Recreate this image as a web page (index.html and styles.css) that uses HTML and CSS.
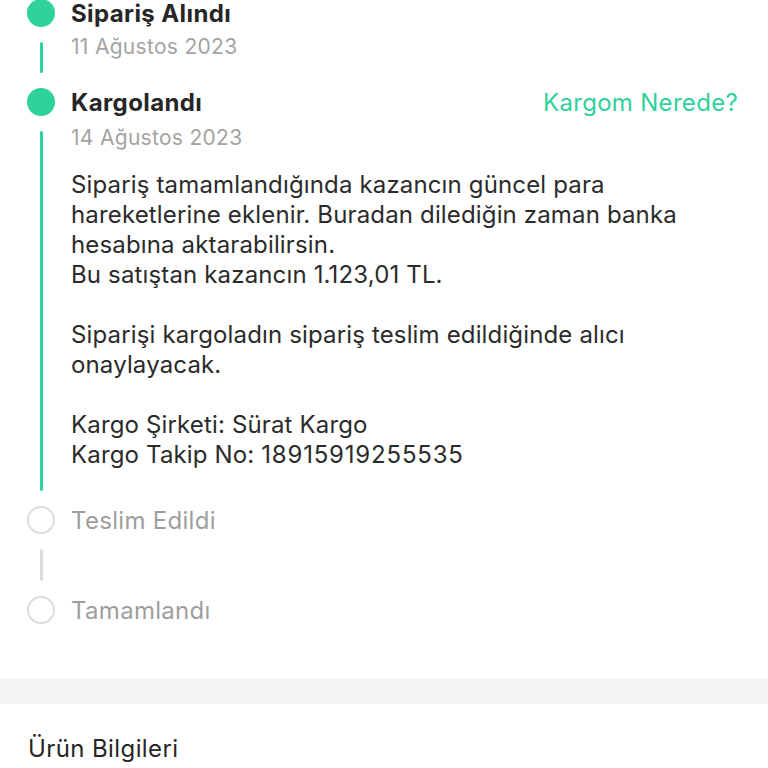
FILE: index.html
```html
<!DOCTYPE html>
<html lang="tr">
<head>
    <meta charset="UTF-8">
    <meta name="viewport" content="width=device-width, initial-scale=1.0">
    <title>Sipariş Durumu</title>
    <link rel="stylesheet" href="styles.css">
</head>
<body>

    <div class="timeline">
        <div class="step done">
            <div class="marker">
                <span class="dot"></span>
                <span class="line"></span>
            </div>
            <div class="content">
                <div class="title-row">
                    <h2>Sipariş Alındı</h2>
                </div>
                <div class="date">11 Ağustos 2023</div>
            </div>
        </div>

        <div class="step done current">
            <div class="marker">
                <span class="dot"></span>
                <span class="line"></span>
            </div>
            <div class="content">
                <div class="title-row">
                    <h2>Kargolandı</h2>
                    <a href="#" class="track">Kargom Nerede?</a>
                </div>
                <div class="date">14 Ağustos 2023</div>
                <div class="info">
                    <p>Sipariş tamamlandığında kazancın güncel para hareketlerine eklenir. Buradan dilediğin zaman banka hesabına aktarabilirsin.<br>Bu satıştan kazancın 1.123,01 TL.</p>
                    <p>Siparişi kargoladın sipariş teslim edildiğinde alıcı onaylayacak.</p>
                    <p>Kargo Şirketi: Sürat Kargo<br>Kargo Takip No: <span class="num">18915919255535</span></p>
                </div>
            </div>
        </div>

        <div class="step pending">
            <div class="marker">
                <span class="dot"></span>
                <span class="line"></span>
            </div>
            <div class="content">
                <div class="title-row">
                    <h2>Teslim Edildi</h2>
                </div>
            </div>
        </div>

        <div class="step pending last">
            <div class="marker">
                <span class="dot"></span>
            </div>
            <div class="content">
                <div class="title-row">
                    <h2>Tamamlandı</h2>
                </div>
            </div>
        </div>
    </div>

    <div class="divider"></div>

    <div class="section">
        <h3>Ürün Bilgileri</h3>
    </div>

</body>
</html>
```

FILE: styles.css
```css
* {
    margin: 0;
    padding: 0;
    box-sizing: border-box;
}

body {
    font-family: Inter, "Noto Sans", sans-serif;
    color: #262626;
    background: #fff;
    overflow: hidden;
}

.timeline {
    margin-top: -1px;
    padding: 0 30px 0 27px;
}

.step {
    display: flex;
    gap: 16px;
}

.marker {
    width: 28px;
    display: flex;
    flex-direction: column;
    align-items: center;
    flex-shrink: 0;
}

.dot {
    width: 28px;
    height: 28px;
    border-radius: 50%;
    flex-shrink: 0;
}

.line {
    flex: 1;
    width: 3px;
    border-radius: 2px;
    margin: 15px 0;
}

.done .dot,
.done .line {
    background: #2fd19c;
}

.pending .dot {
    border: 2px solid #dcdcdc;
}

.pending .line {
    background: #dcdcdc;
}

.content {
    flex: 1;
    padding-bottom: 29px;
}

.current .content {
    padding-bottom: 36px;
}

.pending .content {
    padding-bottom: 62px;
}

.last .content {
    padding-bottom: 0;
}

.title-row {
    display: flex;
    justify-content: space-between;
    align-items: center;
    height: 28px;
}

.title-row h2 {
    font-size: 24px;
    font-weight: 700;
    letter-spacing: 0.4px;
}

.pending .title-row h2 {
    font-weight: 400;
    letter-spacing: 0.3px;
    color: #9e9e9e;
}

.track {
    font-size: 24px;
    letter-spacing: 0.3px;
    color: #2fd19c;
    text-decoration: none;
}

.date {
    margin-top: 8px;
    font-size: 21px;
    line-height: 24px;
    letter-spacing: 0.3px;
    color: #a3a3a3;
}

.current .date {
    margin-top: 10px;
}

.info {
    margin-top: 20px;
    max-width: 650px;
    font-size: 24px;
    line-height: 30px;
    letter-spacing: 0.15px;
    color: #2b2b2b;
}

.info p + p {
    margin-top: 30px;
}

.num {
    letter-spacing: 0.8px;
}

.divider {
    height: 26px;
    margin-top: 54px;
    background: #f5f5f5;
}

.section {
    padding: 31px 28px 0;
}

.section h3 {
    font-size: 24px;
    font-weight: 400;
    line-height: 28px;
    letter-spacing: 0.4px;
}
```
